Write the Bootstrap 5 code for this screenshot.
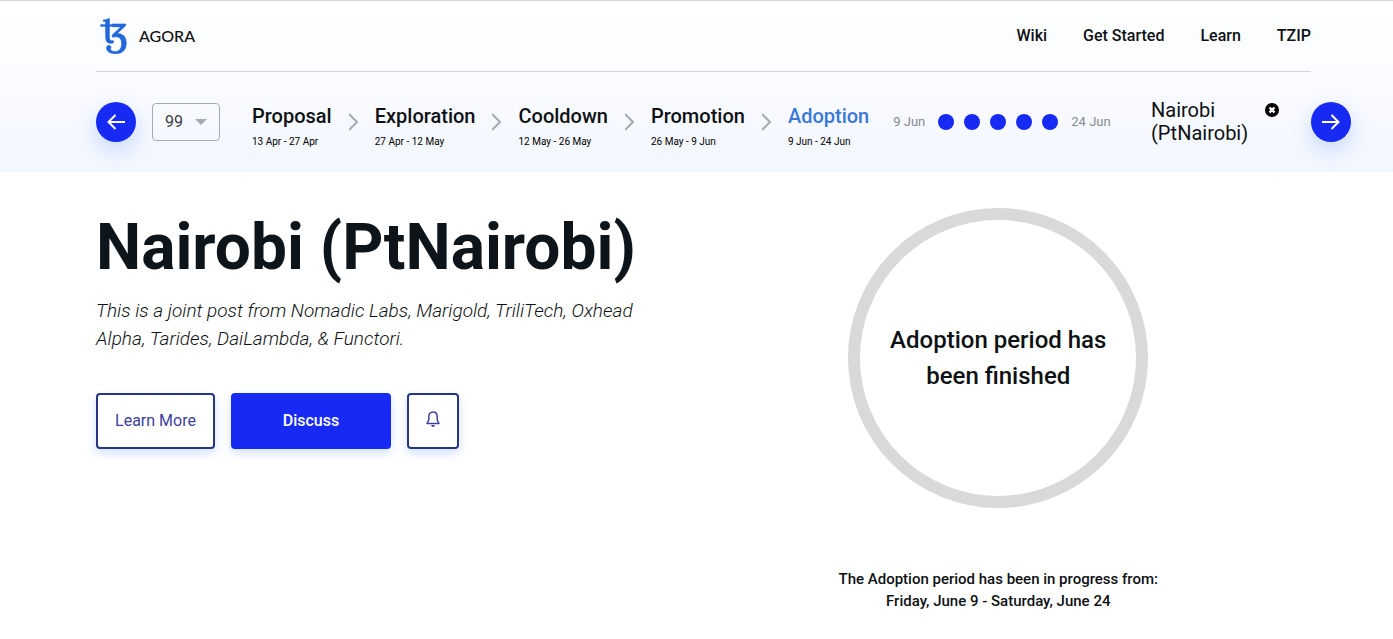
<!DOCTYPE html>
<html lang="en">
<head>
<meta charset="utf-8">
<meta name="viewport" content="width=device-width, initial-scale=1">
<title>Tezos Agora</title>
<link href="https://cdn.jsdelivr.net/npm/bootstrap@5.3.0/dist/css/bootstrap.min.css" rel="stylesheet">
<style>
  body { font-family: Roboto, "Liberation Sans", sans-serif; color: #0e1114; border-top: 1px solid #d4d5d8; }
  a { color: inherit; text-decoration: none; }
  .site-head { background: linear-gradient(#ffffff, #f9fbff 50%, #f2f6fe); }
  .page-inset { padding-left: 96px; padding-right: 82px; }
  .top-bar { height: 71px; border-bottom: 1px solid #d2d5da; }
  .brand-name { font-family: Lato, sans-serif; font-size: 16px; font-weight: 500; color: #111; }
  .top-links { gap: 36px; font-weight: 500; }
  .period-bar { height: 100px; padding-left: 96px; padding-right: 42px; }
  .round-btn { width: 40px; height: 40px; border: 0; background: #172af3; color: #fff; box-shadow: 0 8px 20px rgba(40, 110, 240, .22); }
  .period-pick { width: 68px; height: 38px; font-size: 16px; color: #3b4045; border: 1px solid #a3acb5; border-radius: 4px; padding: 0 0 0 12px;
    background: transparent url("data:image/svg+xml,%3Csvg xmlns='http://www.w3.org/2000/svg' viewBox='0 0 12 6'%3E%3Cpath d='M0 0h12L6 6z' fill='%23a0abb5'/%3E%3C/svg%3E") no-repeat right 12px center / 12px 6px; appearance: none; }
  .stages { gap: 17px; }
  .stages a { padding-top: 8px; }
  .stage-name { font-size: 20px; line-height: 24px; font-weight: 500; }
  .stage-date { font-size: 10px; line-height: 12px; margin-top: 8px; color: #000; }
  .stage-now { color: #3a78d8; }
  .edge-date { font-size: 13px; color: #858a90; }
  .dots { gap: 10px; margin: 0 13px; }
  .dot { width: 16px; height: 16px; background: #172af3; }
  .proposal { width: 98px; font-size: 20px; line-height: 23px; }
  .intro { padding-top: 36px; }
  .title { font-size: 64px; line-height: 80px; font-weight: 700; margin: 0; color: #0d151b; }
  .summary { font-size: 19px; line-height: 28px; font-style: italic; font-weight: 300; max-width: 560px; margin: 9px 0 40px; }
  .act { height: 56px; border: 2px solid #28357f; border-radius: 4px; background: #fff; color: #3c419c; box-shadow: 0 4px 10px rgba(60, 130, 250, .24); font-size: 16px; }
  .act-more { width: 119px; }
  .act-talk { width: 160px; background: #172af3; border-color: #172af3; color: #fff; font-weight: 500; }
  .act-bell { width: 52px; }
  .status { padding-right: 12px; }
  .ring { width: 300px; height: 300px; border: 12px solid #d9d9d9; font-size: 24px; line-height: 36px; font-weight: 500; padding: 0 20px; }
  .range { font-size: 15px; line-height: 22px; font-weight: 500; margin: 60px 0 24px; }
</style>
</head>
<body>
<header class="site-head">
  <div class="page-inset">
    <div class="top-bar d-flex align-items-center justify-content-between">
      <a href="#" class="d-flex align-items-center ps-1" aria-label="Tezos Agora">
        <svg width="27" height="36" viewBox="61 54 81 108" fill="#1f67db" stroke="#1f67db" stroke-width="2" stroke-linejoin="round">
          <path d="M62 73H128V80H62Z" stroke="none"/>
          <path d="M71 60Q82 60 89 55V111Q89 125 101 122L102 128Q78 136 78 111V66Q78 64 71 64Z"/>
          <path d="M98 72H138V77L113 100Q140 102 140 130Q139 161 108 161Q86 161 81 148Q79 137 87 136Q95 137 94 144L91 148Q95 155 108 155Q126 153 126 131Q126 109 108 110L99 112L97 106L124 80H98Z"/>
        </svg>
        <span class="brand-name ms-2 ps-1">AGORA</span>
      </a>
      <nav class="top-links d-flex">
        <a href="#">Wiki</a><a href="#">Get Started</a><a href="#">Learn</a><a href="#">TZIP</a>
      </nav>
    </div>
  </div>
  <div class="period-bar d-flex align-items-center">
    <button type="button" class="round-btn rounded-circle d-flex align-items-center justify-content-center p-0 flex-shrink-0" aria-label="Previous period">
      <svg width="18" height="16" viewBox="0 0 18 16" fill="none" stroke="currentColor" stroke-width="2"><path d="M18 8H1.5M8.5 1l-7 7 7 7"/></svg>
    </button>
    <select class="period-pick ms-3" aria-label="Period"><option>99</option></select>
    <div class="stages d-flex align-items-center ms-3 ps-3">
      <a href="#"><div class="stage-name">Proposal</div><div class="stage-date">13 Apr - 27 Apr</div></a>
      <svg width="9" height="18" viewBox="0 0 9 18" fill="none" stroke="#a5abb3" stroke-width="2"><path d="M0 1l8 8-8 8"/></svg>
      <a href="#"><div class="stage-name">Exploration</div><div class="stage-date">27 Apr - 12 May</div></a>
      <svg width="9" height="18" viewBox="0 0 9 18" fill="none" stroke="#a5abb3" stroke-width="2"><path d="M0 1l8 8-8 8"/></svg>
      <a href="#"><div class="stage-name">Cooldown</div><div class="stage-date">12 May - 26 May</div></a>
      <svg width="9" height="18" viewBox="0 0 9 18" fill="none" stroke="#a5abb3" stroke-width="2"><path d="M0 1l8 8-8 8"/></svg>
      <a href="#"><div class="stage-name">Promotion</div><div class="stage-date">26 May - 9 Jun</div></a>
      <svg width="9" height="18" viewBox="0 0 9 18" fill="none" stroke="#a5abb3" stroke-width="2"><path d="M0 1l8 8-8 8"/></svg>
      <a href="#"><div class="stage-name stage-now">Adoption</div><div class="stage-date">9 Jun - 24 Jun</div></a>
    </div>
    <div class="d-flex align-items-center ms-4 text-nowrap">
      <span class="edge-date">9 Jun</span>
      <div class="dots d-flex">
        <span class="dot rounded-circle"></span><span class="dot rounded-circle"></span><span class="dot rounded-circle"></span><span class="dot rounded-circle"></span><span class="dot rounded-circle"></span>
      </div>
      <span class="edge-date">24 Jun</span>
    </div>
    <div class="d-flex ms-auto me-3 pe-3">
      <div class="proposal">Nairobi (PtNairobi)</div>
      <svg class="ms-3 mt-1" width="14" height="14" viewBox="0 0 14 14"><circle cx="7" cy="7" r="7" fill="#000"/><path d="M4.5 4.5l5 5M9.5 4.5l-5 5" stroke="#fff" stroke-width="2.4"/></svg>
    </div>
    <button type="button" class="round-btn rounded-circle d-flex align-items-center justify-content-center p-0 flex-shrink-0" aria-label="Next period">
      <svg width="18" height="16" viewBox="0 0 18 16" fill="none" stroke="currentColor" stroke-width="2"><path d="M0 8h16.5M9.5 1l7 7-7 7"/></svg>
    </button>
  </div>
</header>
<main class="page-inset">
  <div class="intro row gx-0">
    <section class="col">
      <h1 class="title">Nairobi (PtNairobi)</h1>
      <p class="summary">This is a joint post from Nomadic Labs, Marigold, TriliTech, Oxhead Alpha, Tarides, DaiLambda, &amp; Functori.</p>
      <div class="d-flex gap-3">
        <button type="button" class="act act-more p-0">Learn More</button>
        <button type="button" class="act act-talk p-0">Discuss</button>
        <button type="button" class="act act-bell d-flex align-items-center justify-content-center p-0" aria-label="Notify me">
          <svg class="mb-1" width="14" height="16" viewBox="0 0 14 16" fill="none" stroke="currentColor" stroke-width="1.5" stroke-linejoin="round"><path d="M7 1C4.3 1 2.8 3 2.8 5.5V9L1 12.5H13L11.2 9V5.5C11.2 3 9.7 1 7 1Z"/><path d="M5 14h4q-.5 2-2 2t-2-2z" fill="currentColor" stroke="none"/></svg>
        </button>
      </div>
    </section>
    <section class="status col d-flex flex-column align-items-center text-center">
      <div class="ring rounded-circle d-flex align-items-center">Adoption period has been finished</div>
      <p class="range">The Adoption period has been in progress from:<br>Friday, June 9 - Saturday, June 24</p>
    </section>
  </div>
</main>
<script src="https://cdn.jsdelivr.net/npm/bootstrap@5.3.0/dist/js/bootstrap.bundle.min.js"></script>
</body>
</html>
